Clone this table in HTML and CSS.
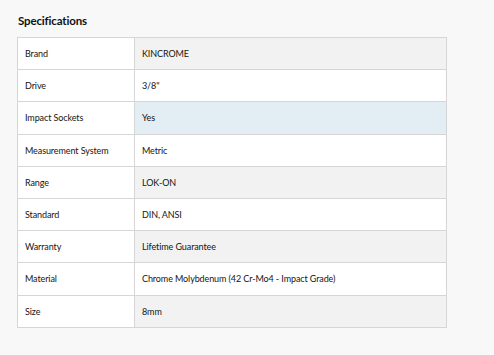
FILE: index.html
```html
<!DOCTYPE html>
<html>
<head>
<meta charset="utf-8">
<link rel="stylesheet" href="styles.css">
</head>
<body>
<section class="specs">
  <h2 class="specs-title">Specifications</h2>
  <table class="specs-table">
    <tbody>
      <tr class="row-alt"><td class="label">Brand</td><td class="value">KINCROME</td></tr>
      <tr><td class="label">Drive</td><td class="value">3/8"</td></tr>
      <tr class="row-hl"><td class="label">Impact Sockets</td><td class="value">Yes</td></tr>
      <tr><td class="label">Measurement System</td><td class="value">Metric</td></tr>
      <tr class="row-alt"><td class="label">Range</td><td class="value">LOK-ON</td></tr>
      <tr><td class="label">Standard</td><td class="value">DIN, ANSI</td></tr>
      <tr class="row-alt"><td class="label">Warranty</td><td class="value">Lifetime Guarantee</td></tr>
      <tr><td class="label">Material</td><td class="value">Chrome Molybdenum (42 Cr-Mo4 - Impact Grade)</td></tr>
      <tr class="row-alt"><td class="label">Size</td><td class="value">8mm</td></tr>
    </tbody>
  </table>
</section>
</body>
</html>
```
FILE: styles.css
```css
html, body {
  margin: 0;
  padding: 0;
  background: #f8f8f8;
}
body {
  font-family: Lato, "Liberation Sans", sans-serif;
  color: #151515;
}
.specs {
  padding: 13px 0 0 17px;
}
.specs-title {
  margin: 0 0 0 1px;
  font-size: 11.5px;
  line-height: 15px;
  letter-spacing: -0.15px;
  font-weight: 700;
  color: #111;
  height: 24px;
}
.specs-table {
  border-collapse: collapse;
  width: 430px;
  font-size: 9px;
  letter-spacing: -0.1px;
}
.specs-table tr {
  height: 32.2px;
}
.specs-table td {
  border: 1px solid #d6d6d6;
  padding: 0 0 0 7px;
  vertical-align: middle;
  background: #fff;
}
.specs-table td.label {
  width: 109px;
}
.row-alt td.value {
  background: #f2f2f2;
}
.row-hl td.value {
  background: #e2edf4;
}
```
